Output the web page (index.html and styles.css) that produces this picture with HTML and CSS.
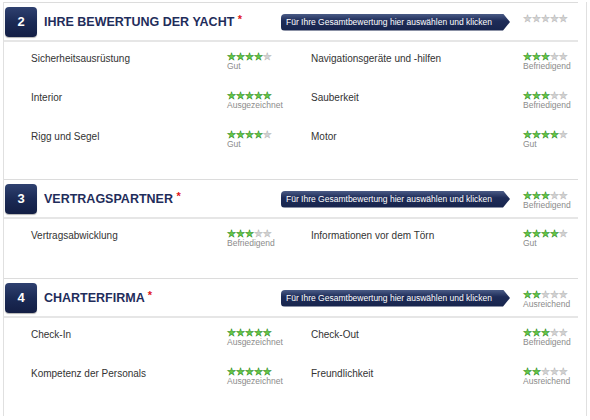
FILE: index.html
```html
<!DOCTYPE html>
<html>
<head>
  <meta charset="UTF-8">
  <title>Bewertung</title>
  <link rel="stylesheet" href="styles.css">
</head>
<body>
  <div class="bewertung">

    <!-- 2: Yacht -->
    <div class="block">
      <div class="block-head">
        <span class="nr">2</span>
        <h2>IHRE BEWERTUNG DER YACHT <span class="req">*</span></h2>
        <a class="gesamt" href="#">Für Ihre Gesamtbewertung hier auswählen und klicken</a>
        <div class="rating head-rating">
          <span class="stars">★★★★★</span>
        </div>
      </div>
      <div class="block-body">
        <span class="name">Sicherheitsausrüstung</span>
        <div class="rating"><span class="stars"><b>★★★★</b>★</span><span class="note">Gut</span></div>
        <span class="name">Navigationsgeräte und -hilfen</span>
        <div class="rating"><span class="stars"><b>★★★</b>★★</span><span class="note">Befriedigend</span></div>

        <span class="name">Interior</span>
        <div class="rating"><span class="stars"><b>★★★★★</b></span><span class="note">Ausgezeichnet</span></div>
        <span class="name">Sauberkeit</span>
        <div class="rating"><span class="stars"><b>★★★</b>★★</span><span class="note">Befriedigend</span></div>

        <span class="name">Rigg und Segel</span>
        <div class="rating"><span class="stars"><b>★★★★</b>★</span><span class="note">Gut</span></div>
        <span class="name">Motor</span>
        <div class="rating"><span class="stars"><b>★★★★</b>★</span><span class="note">Gut</span></div>
      </div>
    </div>

    <!-- 3: Vertragspartner -->
    <div class="block">
      <div class="block-head">
        <span class="nr">3</span>
        <h2>VERTRAGSPARTNER <span class="req">*</span></h2>
        <a class="gesamt" href="#">Für Ihre Gesamtbewertung hier auswählen und klicken</a>
        <div class="rating head-rating">
          <span class="stars"><b>★★★</b>★★</span><span class="note">Befriedigend</span>
        </div>
      </div>
      <div class="block-body">
        <span class="name">Vertragsabwicklung</span>
        <div class="rating"><span class="stars"><b>★★★</b>★★</span><span class="note">Befriedigend</span></div>
        <span class="name">Informationen vor dem Törn</span>
        <div class="rating"><span class="stars"><b>★★★★</b>★</span><span class="note">Gut</span></div>
      </div>
    </div>

    <!-- 4: Charterfirma -->
    <div class="block">
      <div class="block-head">
        <span class="nr">4</span>
        <h2>CHARTERFIRMA <span class="req">*</span></h2>
        <a class="gesamt" href="#">Für Ihre Gesamtbewertung hier auswählen und klicken</a>
        <div class="rating head-rating">
          <span class="stars"><b>★★</b>★★★</span><span class="note">Ausreichend</span>
        </div>
      </div>
      <div class="block-body">
        <span class="name">Check-In</span>
        <div class="rating"><span class="stars"><b>★★★★★</b></span><span class="note">Ausgezeichnet</span></div>
        <span class="name">Check-Out</span>
        <div class="rating"><span class="stars"><b>★★★</b>★★</span><span class="note">Befriedigend</span></div>

        <span class="name">Kompetenz der Personals</span>
        <div class="rating"><span class="stars"><b>★★★★★</b></span><span class="note">Ausgezeichnet</span></div>
        <span class="name">Freundlichkeit</span>
        <div class="rating"><span class="stars"><b>★★</b>★★★</span><span class="note">Ausreichend</span></div>
      </div>
    </div>

  </div>
</body>
</html>
```

FILE: styles.css
```css
/* Bewertungsformular */
body {
  font-family: "Liberation Sans", Arial, sans-serif;
  margin: 0;
  padding: 0;
  color: #333;
  background-color: #fff;
}

.bewertung {
  width: 574px;
  margin: 2px 0 0 3px;
  padding-right: 8px;
  border-left: 1px solid #e0e0e0;
  border-right: 1px solid #e0e0e0;
}

.block {
  border-top: 1px solid #dcdcdc;
}

/* Kopfzeile */
.block-head {
  display: flex;
  align-items: center;
  padding: 4px 0 3px 1px;
  border-bottom: 2px solid #e6e6e6;
}

.nr {
  width: 32px;
  height: 30px;
  line-height: 30px;
  text-align: center;
  color: #fff;
  font-size: 13px;
  font-weight: bold;
  border-radius: 4px;
  background: linear-gradient(#2f4170, #1b2a55 50%, #131e44);
  box-shadow: 0 1px 1px rgba(0, 0, 0, 0.3);
}

.block-head h2 {
  flex: 1;
  margin: 0 0 0 7px;
  font-size: 12.5px;
  font-weight: bold;
  color: #1f2d5b;
}

.req {
  color: #e0161b;
  font-size: 11px;
  vertical-align: top;
  position: relative;
  top: -2px;
}

.gesamt {
  width: 224px;
  height: 17px;
  line-height: 17px;
  padding-left: 5px;
  margin-right: 13px;
  font-size: 8.5px;
  color: #fff;
  text-decoration: none;
  white-space: nowrap;
  border-radius: 4px 0 0 4px;
  background: linear-gradient(#4a5b86, #1e2c58 40%, #17244c);
  clip-path: polygon(0 0, calc(100% - 7px) 0, 100% 50%, calc(100% - 7px) 100%, 0 100%);
}

.head-rating {
  width: 55px;
  align-self: flex-start;
  margin-top: 7px;
}

/* Kriterien */
.block-body {
  display: grid;
  grid-template-columns: 196px 84px 212px 1fr;
  grid-auto-rows: 19px;
  row-gap: 20px;
  padding: 10px 0 30px 27px;
}

.name {
  font-size: 10px;
  line-height: 14px;
  color: #333;
}

.stars {
  display: block;
  height: 10px;
  font-family: "DejaVu Sans", sans-serif;
  font-size: 10px;
  line-height: 10px;
  color: #d2d2d2;
  -webkit-text-stroke: 0.4px #b4b4b4;
  white-space: nowrap;
}

.stars b {
  font-weight: normal;
  color: #66c845;
  -webkit-text-stroke: 0.5px #2e8c24;
}

.note {
  display: block;
  font-size: 8.5px;
  line-height: 9px;
  color: #8c8c8c;
}
```
